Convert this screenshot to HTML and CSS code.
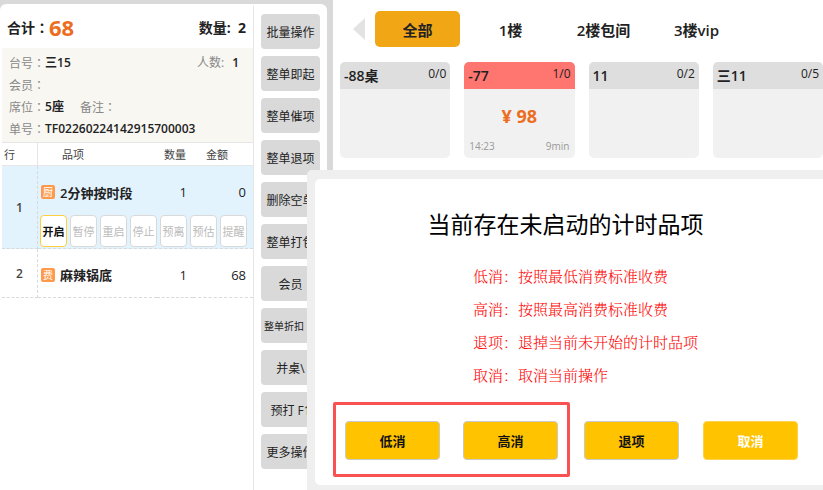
FILE: index.html
```html
<!DOCTYPE html>
<html lang="zh-CN">
<head>
    <meta charset="UTF-8">
    <meta name="viewport" content="width=device-width, initial-scale=1.0">
    <title>点单</title>
    <link rel="stylesheet" href="styles.css">
</head>
<body>
<div class="pos">

    <aside class="order">
        <div class="order-panel">
            <section class="bill">
                <div class="bill-total">
                    <span>合计<span class="colon" lang="zh-TW">：</span></span>
                    <span class="total-price">68</span>
                    <span class="total-count">数量:&nbsp; 2</span>
                </div>

                <div class="bill-info">
                    <div class="info-row">
                        <span class="info-label">台号<span class="colon" lang="zh-TW">：</span></span><b>三15</b>
                        <span class="people"><span class="info-label">人数:</span><b>1</b></span>
                    </div>
                    <div class="info-row"><span class="info-label">会员<span class="colon" lang="zh-TW">：</span></span></div>
                    <div class="info-row">
                        <span class="info-label">席位<span class="colon" lang="zh-TW">：</span></span><b>5座</b>
                        <span class="info-label remark">备注<span class="colon" lang="zh-TW">：</span></span>
                    </div>
                    <div class="info-row"><span class="info-label">单号<span class="colon" lang="zh-TW">：</span></span><b>TF02260224142915700003</b></div>
                </div>

                <table class="items">
                    <colgroup>
                        <col class="col-no">
                        <col>
                        <col class="col-qty">
                        <col class="col-sum">
                    </colgroup>
                    <thead>
                        <tr>
                            <th class="head-no">行</th>
                            <th class="head-name">品项</th>
                            <th class="head-qty">数量</th>
                            <th class="head-sum">金额</th>
                        </tr>
                    </thead>
                    <tbody>
                        <tr class="item selected">
                            <td class="no" rowspan="2">1</td>
                            <td><span class="name"><span class="tag">厨</span>2分钟按时段</span></td>
                            <td class="num">1</td>
                            <td class="num sum">0</td>
                        </tr>
                        <tr class="selected line-end">
                            <td class="actions-cell" colspan="3">
                                <div class="actions">
                                    <button type="button" class="action-btn active">开启</button>
                                    <button type="button" class="action-btn">暂停</button>
                                    <button type="button" class="action-btn">重启</button>
                                    <button type="button" class="action-btn">停止</button>
                                    <button type="button" class="action-btn">预离</button>
                                    <button type="button" class="action-btn">预估</button>
                                    <button type="button" class="action-btn">提醒</button>
                                </div>
                            </td>
                        </tr>
                        <tr class="item line-end">
                            <td class="no">2</td>
                            <td><span class="name"><span class="tag">费</span>麻辣锅底</span></td>
                            <td class="num">1</td>
                            <td class="num sum">68</td>
                        </tr>
                    </tbody>
                </table>
            </section>

            <nav class="ops">
                <button type="button" class="op-btn">批量操作</button>
                <button type="button" class="op-btn">整单即起</button>
                <button type="button" class="op-btn">整单催项</button>
                <button type="button" class="op-btn">整单退项</button>
                <button type="button" class="op-btn">删除空单</button>
                <button type="button" class="op-btn">整单打包</button>
                <button type="button" class="op-btn">会员</button>
                <button type="button" class="op-btn op-small">整单折扣</button>
                <button type="button" class="op-btn">并桌\</button>
                <button type="button" class="op-btn">预打 F1</button>
                <button type="button" class="op-btn">更多操作</button>
            </nav>
        </div>
    </aside>

    <main class="tables">
        <div class="areas">
            <button type="button" class="prev" aria-label="上一页">
                <svg width="12" height="22" viewBox="0 0 12 22"><path d="M12 0v22L0 11z" fill="#e3e3e3"/></svg>
            </button>
            <button type="button" class="area-btn current">全部</button>
            <button type="button" class="area-btn">1楼</button>
            <button type="button" class="area-btn">2楼包间</button>
            <button type="button" class="area-btn">3楼vip</button>
        </div>

        <div class="cards">
            <div class="card">
                <div class="card-head"><b>-88桌</b><span>0/0</span></div>
            </div>
            <div class="card busy">
                <div class="card-head"><b>-77</b><span>1/0</span></div>
                <div class="card-price">¥ 98</div>
                <div class="card-foot"><span>14:23</span><span>9min</span></div>
            </div>
            <div class="card">
                <div class="card-head"><b>11</b><span>0/2</span></div>
            </div>
            <div class="card">
                <div class="card-head"><b>三11</b><span>0/5</span></div>
            </div>
        </div>
    </main>

    <div class="dialog" role="dialog" aria-labelledby="dialog-title">
        <div class="dialog-body">
            <h2 id="dialog-title">当前存在未启动的计时品项</h2>
            <ul class="tips">
                <li>低消：按照最低消费标准收费</li>
                <li>高消：按照最高消费标准收费</li>
                <li>退项：退掉当前未开始的计时品项</li>
                <li>取消：取消当前操作</li>
            </ul>
            <div class="dialog-buttons">
                <div class="marked">
                    <button type="button" class="dialog-btn">低消</button>
                    <button type="button" class="dialog-btn">高消</button>
                </div>
                <div class="others">
                    <button type="button" class="dialog-btn">退项</button>
                    <button type="button" class="dialog-btn cancel">取消</button>
                </div>
            </div>
        </div>
    </div>

</div>
</body>
</html>
```

FILE: styles.css
```css
* {
    box-sizing: border-box;
}
body {
    margin: 0;
    font-family: "Open Sans", "Noto Sans CJK SC", sans-serif;
    font-size: 12px;
    color: #222;
    background-color: #fff;
}
button {
    padding: 0;
    border: none;
    font-family: inherit;
    color: inherit;
    white-space: nowrap;
    cursor: pointer;
}
.pos {
    position: relative;
    display: flex;
    min-height: 100vh;
}

/* Order panel */
.order {
    flex: none;
    width: 333px;
    padding: 4px 6px 0 0;
    background-color: #d9d9d9;
}
.order-panel {
    display: flex;
    height: 100%;
    background-color: #fff;
    border-radius: 6px 6px 0 0;
}
.bill {
    flex: 1;
    margin-top: 2px;
    padding-left: 2px;
    border-right: 1px solid #e6e6e6;
}
.bill-total {
    display: flex;
    align-items: center;
    height: 42px;
    padding: 0 7px 0 5px;
    font-size: 14px;
    font-weight: bold;
}
.total-price {
    font-size: 22px;
    color: #ed6d1f;
}
.total-count {
    margin-left: auto;
}
.colon {
    font-family: "Noto Sans CJK TC", sans-serif; /* colon centred in its cell */
}
.bill-info {
    padding: 4px 14px 2px 7px;
    background-color: #f8f7f2;
}
.info-row {
    display: flex;
    height: 22px;
    line-height: 22px;
}
.info-row b {
    font-weight: 600;
}
.info-label {
    color: #888;
}
.people {
    display: flex;
    gap: 8px;
    margin-left: auto;
}
.remark {
    margin-left: 16px;
}

/* Item list */
.items {
    width: 100%;
    table-layout: fixed;
    border-collapse: separate;
    border-spacing: 0;
}
.items th,
.items td {
    padding: 0;
}
.col-no {
    width: 36px;
}
.col-qty {
    width: 36px;
}
.col-sum {
    width: 60px;
}
.items th {
    height: 24px;
    font-size: 11px;
    font-weight: normal;
    text-align: left;
    color: #444;
    border-top: 1px solid #e6e6e6;
    border-bottom: 1px solid #e6e6e6;
}
.items .head-no {
    padding-left: 2px;
    border-right: 1px solid #e6e6e6;
}
.items .head-name {
    padding-left: 24px;
}
.items .head-qty {
    text-align: center;
}
.items .head-sum {
    padding-left: 13px;
}
.items .item td {
    height: 49px;
    padding-top: 3px;
}
.items .item .no {
    padding: 0;
    font-weight: 600;
    text-align: center;
    color: #444;
    border-right: 1px dashed #d9d9d9;
    border-bottom: 1px dashed #d9d9d9;
}
.line-end td {
    border-bottom: 1px dashed #d9d9d9;
}
.selected td {
    background-color: #e3f3fe;
}
.name {
    display: flex;
    align-items: center;
    gap: 5px;
    padding-left: 3px;
    font-size: 13px;
    font-weight: 600;
    white-space: nowrap;
}
.tag {
    width: 14px;
    height: 14px;
    font-size: 10px;
    font-weight: normal;
    line-height: 14px;
    text-align: center;
    color: #fff;
    background-color: #ff9a4d;
    border-radius: 2px;
}
.items .num {
    padding-right: 6px;
    font-size: 13px;
    text-align: right;
}
.items .sum {
    padding-right: 7px;
}
.actions {
    display: flex;
    gap: 3px;
    padding: 0 6px 1px 2px;
}
.action-btn {
    flex: 1;
    height: 32px;
    font-size: 11px;
    color: #bbb;
    background-color: #fff;
    border: 1px solid #d9d9d9;
    border-radius: 4px;
}
.action-btn.active {
    font-weight: 600;
    color: #111;
    border-color: #ffcf3f;
}

/* Operations column */
.ops {
    display: flex;
    flex-direction: column;
    gap: 7px;
    padding: 10px 7px 9px;
}
.op-btn {
    width: 59px;
    height: 35px;
    font-size: 12px;
    background-color: #d9d9d9;
    border-radius: 4px;
}
.op-small {
    padding-left: 3px;
    font-size: 10px;
    text-align: left;
}

/* Table overview */
.tables {
    flex: 1;
    padding: 11px 0 0 7px;
}
.areas {
    display: flex;
    gap: 8px;
    padding-left: 13px;
}
.prev {
    display: flex;
    align-items: center;
    width: 14px;
    background: none;
}
.area-btn {
    width: 85px;
    height: 36px;
    font-size: 15px;
    font-weight: 600;
    background: none;
    border-radius: 5px;
}
.area-btn.current {
    background-color: #f0a615;
}
.cards {
    display: grid;
    grid-template-columns: repeat(4, 1fr);
    gap: 14px;
    margin-top: 15px;
}
.card {
    height: 96px;
    background-color: #f1f1f1;
    border-radius: 5px;
    overflow: hidden;
}
.card-head {
    display: flex;
    justify-content: space-between;
    height: 27px;
    padding: 0 4px;
    line-height: 24px;
    background-color: #dedede;
}
.card-head b {
    font-size: 14px;
    font-weight: 600;
    line-height: 27px;
}
.busy .card-head {
    background-color: #ff7570;
}
.card-price {
    height: 44px;
    padding-top: 5px;
    font-size: 18px;
    font-weight: bold;
    line-height: 44px;
    text-align: center;
    color: #ed6d1f;
}
.card-foot {
    display: flex;
    justify-content: space-between;
    padding: 6px 5px 0;
    font-size: 10px;
    color: #999;
}

/* Dialog over the page */
.dialog {
    position: absolute;
    top: 170px;
    right: 0;
    left: 307px;
    padding: 9px 0 5px 8px;
    background-color: #efefef;
    border-radius: 5px 0 0 0;
}
.dialog-body {
    padding: 29px 25px 8px 18px;
    background-color: #fff;
    border-radius: 5px 0 0 5px;
}
.dialog h2 {
    margin: 0 0 19px;
    font-size: 23px;
    font-weight: normal;
    line-height: 32px;
    text-align: center;
    color: #000;
}
.tips {
    margin: 0 0 11px;
    padding: 0 0 0 140px;
    list-style: none;
    font-family: "Noto Serif CJK SC", "Noto Sans CJK SC", serif;
    font-size: 15px;
    font-weight: 300;
    line-height: 33px;
    color: #ff0000;
}
.dialog-buttons {
    display: flex;
    align-items: flex-start;
    justify-content: space-between;
}
.marked {
    display: flex;
    gap: 23px;
    padding: 16px 9px 14px;
    border: 3px solid #fa5252;
    border-radius: 2px;
}
.others {
    display: flex;
    gap: 24px;
    padding-top: 19px;
}
.dialog-btn {
    width: 95px;
    height: 39px;
    font-size: 13px;
    font-weight: 600;
    color: #111;
    background-color: #ffc300;
    border: 1px solid #c9c9c9;
    border-radius: 4px;
}
.dialog-btn.cancel {
    color: #fff;
    border-color: #ffd24d;
}
```
